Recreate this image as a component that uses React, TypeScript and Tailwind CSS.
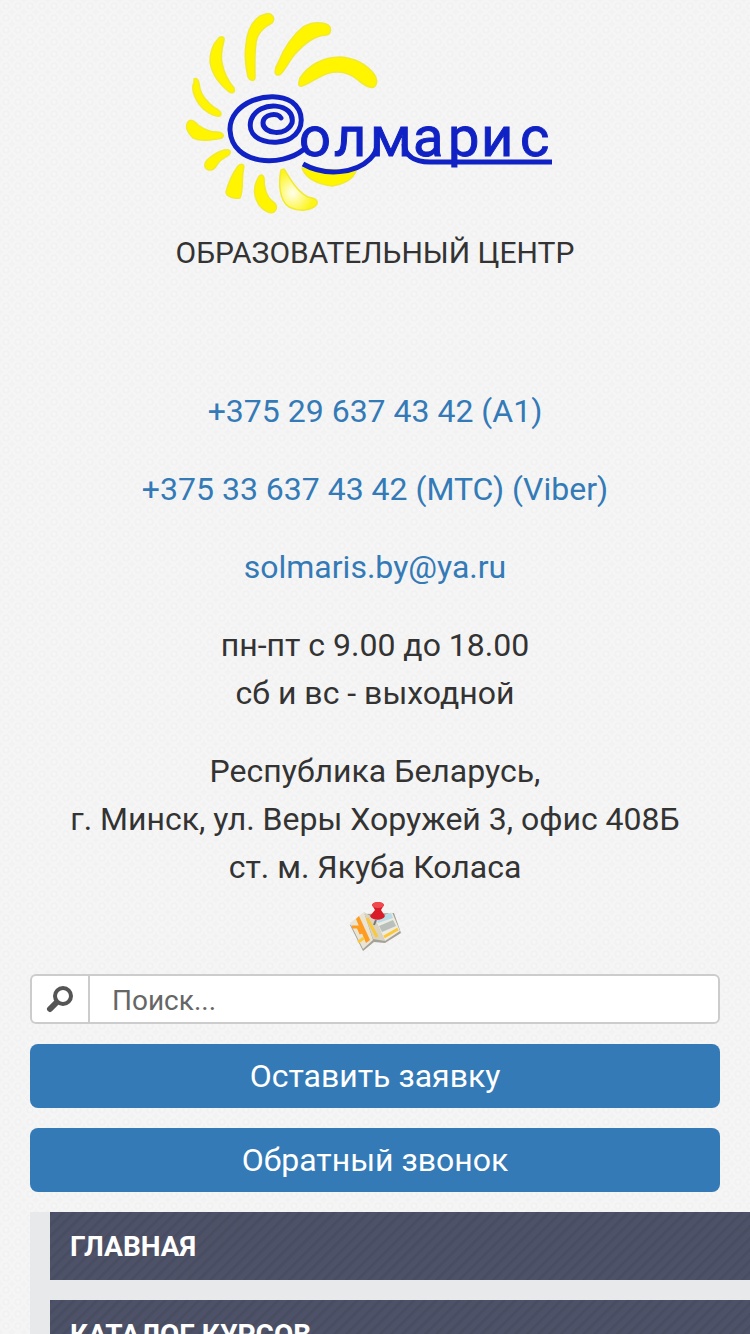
const rays = [
  "M194 83C191 88 194 97 199 104C205 112 214 117 220 116C223 113 219 110 215 108C208 103 202 96 200 89C199 82 198 77 194 79Z",
  "M218 39C213 44 210 53 210 62C212 75 219 83 228 91C231 94 236 93 234 88C228 81 224 73 222 63C220 54 223 45 224 40C225 36 220 36 218 39Z",
  "M260 16C250 23 247 33 246 44C244 57 246 68 248 77C250 81 255 82 255 77C255 64 254 49 257 38C260 30 266 26 272 23C276 19 272 12 266 14Z",
  "M303 27C293 35 284 48 278 63C274 69 274 76 279 75C283 75 288 62 295 54C305 43 314 36 326 35C332 34 332 26 326 24C319 22 310 23 303 27Z",
  "M300 78C299 82 297 87 302 86C309 84 317 77 329 73C341 70 350 73 358 80C363 84 369 89 374 87C378 84 377 78 374 74C366 64 355 58 340 57C322 57 308 66 300 78Z",
  "M187 124C185 129 189 134 193 138C202 142 212 140 222 138C225 135 222 132 217 132C209 132 204 129 198 125C193 119 189 119 187 124Z",
  "M207 160C203 165 205 169 209 170C215 171 216 165 220 161C224 157 232 155 230 151C227 148 217 151 207 160Z",
  "M238 166C233 173 228 184 226 192C226 197 235 199 240 198C244 190 241 176 244 167C243 163 240 164 238 166Z",
  "M258 178C253 187 254 197 259 205C264 211 270 214 274 212C278 209 277 204 272 201C265 195 264 185 264 178C263 174 260 174 258 178Z",
];

function Logo() {
  return (
    <svg viewBox="185 5 380 215" className="block h-[215px] w-[380px] max-w-full" role="img" aria-label="Солмарис">
      <defs>
        <radialGradient id="shine" cx="35%" cy="58%" r="55%">
          <stop offset="0" stopColor="#fffff0" />
          <stop offset="1" stopColor="#fdf51a" />
        </radialGradient>
      </defs>
      <g fill="#fff500" stroke="#f1ea30" strokeWidth="1.5" strokeLinejoin="round">
        {rays.map((d) => <path key={d} d={d} />)}
        <path d="M281 170C278 185 280 201 289 207C299 212 312 211 317 204C318 199 313 198 308 197C297 192 290 178 284 169Z" fill="url(#shine)" />
        <path d="M302 168C306 179 317 184 332 186C344 184 353 179 356 171Z" />
      </g>
      <g fill="none" stroke="#1122c4" strokeWidth="5">
        <path strokeLinecap="round" d="M281 118C278 112 263 114 263 123C263 134 286 137 292 123C296 103 259 99 251 120C245 142 277 147 291 138C305 129 304 111 292 102C270 88 229 103 230 130C232 166 282 167 303 150" />
        <path d="M303 164C326 177 356 173 370 159C374 155 377 150 377 144M404 144C405 154 412 162 430 162H552" />
      </g>
      <text x="299 334 370 413 448 481 520" y="156" fill="#1122c4" stroke="#1122c4" strokeWidth="1" fontSize="56" fontFamily="Roboto, sans-serif">олмарис</text>
    </svg>
  );
}

function MapIcon() {
  return (
    <svg viewBox="0 0 54 50" className="h-[50px] w-[54px]" aria-hidden="true">
      <path d="M2 24L16 13L46 12L53 32L37 42L26 41L15 50Z" fill="#a5a196" />
      <path d="M2 22L16 11L25 39L15 48Z" fill="#e9e4d4" />
      <path d="M16 11L27 18L37 40L25 38Z" fill="#d9d3c2" />
      <path d="M27 18L44 11L52 30L37 40Z" fill="#eeebe0" />
      <path d="M28 17L43 12L45 17L30 22Z" fill="#b5dce8" />
      <path d="M31 25L45 19L48 25L34 31Z" fill="#b9c0bc" />
      <path d="M8 18L11 15L22 39L18 42Z" fill="#ff9b20" />
      <path d="M4 26L10 26L13 33" fill="none" stroke="#ff9b20" strokeWidth="3" />
      <path d="M10 41L16 37M19 17L29 36M36 36L50 28" fill="none" stroke="#fbc83b" strokeWidth="3" />
      <path d="M28 19L26 24" stroke="#777" strokeWidth="2" />
      <path d="M24 4C25 0 35 0 36 4L33 9L37 15C35 20 24 20 22 15L27 9Z" fill="#d91b28" />
      <ellipse cx="30" cy="4" rx="6" ry="3" fill="#f04a50" />
    </svg>
  );
}

const stripes =
  "bg-[#4d5268] bg-[repeating-linear-gradient(135deg,#484d61_0px,#484d61_2px,#4d5268_4px,#4d5268_8px)]";
const link = "text-[#337ab7]";
const button = "h-16 w-full rounded-lg bg-[#337ab7] text-[32px] text-white";
const menu = ["Главная", "Каталог курсов"];

export default function App() {
  return (
    <div className="min-h-screen bg-[#f3f3f3] bg-[radial-gradient(circle,#f8f8f8_0px,#f1f1f1_3px,#f6f6f6_5px,#f2f2f2_7px)] bg-[length:12px_12px] font-['Roboto',sans-serif] text-[32px] leading-[48px] text-[#333]">
      <header className="flex flex-col items-center px-[30px] pt-[5px] text-center">
        <Logo />
        <p className="mt-[9px] text-[30px]">ОБРАЗОВАТЕЛЬНЫЙ ЦЕНТР</p>
        <div className="mt-[110px] flex flex-col gap-[30px]">
          <a className={link} href="tel:+375296374342">+375 29 637 43 42 (A1)</a>
          <a className={link} href="tel:+375336374342">+375 33 637 43 42 (МТС) (Viber)</a>
          <a className={link} href="mailto:solmaris.by@ya.ru">solmaris.by@ya.ru</a>
          <p>пн-пт с 9.00 до 18.00<br />сб и вс - выходной</p>
          <address className="not-italic">
            Республика Беларусь,<br />г. Минск, ул. Веры Хоружей 3, офис 408Б<br />ст. м. Якуба Коласа
          </address>
        </div>
        <a href="#map" aria-label="Карта" className="mt-[10px]"><MapIcon /></a>
      </header>
      <main className="pl-[30px]">
        <div className="flex flex-col gap-5 pr-[30px] pt-[23px]">
          <form className="flex h-[50px] overflow-hidden rounded-md border-2 border-[#ccc] bg-white" onSubmit={(e) => e.preventDefault()}>
            <button aria-label="Найти" className="flex w-[58px] shrink-0 items-center justify-center border-r-2 border-[#ccc]">
              <svg viewBox="0 0 28 28" className="size-7" fill="none" stroke="#555" strokeLinecap="round" aria-hidden="true">
                <circle cx="17" cy="11" r="8" strokeWidth="4" />
                <path d="M10 18L4 24" strokeWidth="6" />
              </svg>
            </button>
            <input aria-label="Поиск" placeholder="Поиск..." className="min-w-0 flex-1 px-[22px] pt-1 text-[28px] outline-none placeholder:text-[#666]" />
          </form>
          <button className={button}>Оставить заявку</button>
          <button className={button}>Обратный звонок</button>
        </div>
        <nav className="mt-5 flex flex-col gap-5 bg-[#e7e9eb] pl-5">
          {menu.map((item) => (
            <a key={item} href="#menu" className={`flex h-[68px] items-center pl-5 pt-0.5 text-[28px] font-bold uppercase text-white ${stripes}`}>{item}</a>
          ))}
        </nav>
      </main>
    </div>
  );
}
